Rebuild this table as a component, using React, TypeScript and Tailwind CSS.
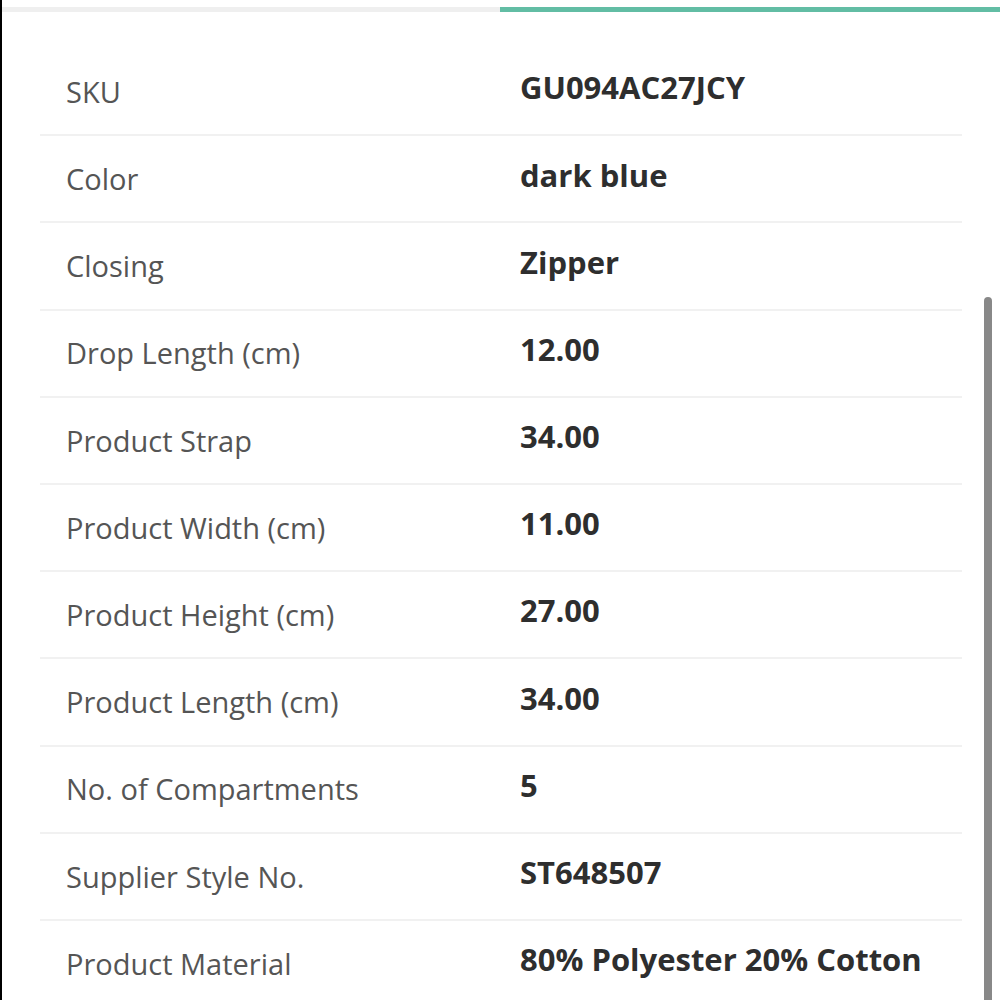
import React from 'react';

interface Spec {
  label: string;
  value: string;
}

const specs: Spec[] = [
  { label: 'SKU', value: 'GU094AC27JCY' },
  { label: 'Color', value: 'dark blue' },
  { label: 'Closing', value: 'Zipper' },
  { label: 'Drop Length (cm)', value: '12.00' },
  { label: 'Product Strap', value: '34.00' },
  { label: 'Product Width (cm)', value: '11.00' },
  { label: 'Product Height (cm)', value: '27.00' },
  { label: 'Product Length (cm)', value: '34.00' },
  { label: 'No. of Compartments', value: '5' },
  { label: 'Supplier Style No.', value: 'ST648507' },
  { label: 'Product Material', value: '80% Polyester 20% Cotton' },
];

const App = () => {
  return (
    <div
      className="relative h-[1000px] w-[1000px] overflow-hidden border-l-2 border-black bg-white"
      style={{ fontFamily: '"Open Sans", Lato, sans-serif' }}
    >
      {/* Tab indicator */}
      <div className="mt-[7px] flex h-[5px]">
        <div className="w-[498px] bg-[#efefef]" />
        <div className="flex-1 bg-[#62bda4]" />
      </div>

      {/* Spec table */}
      <div className="ml-[38px] mt-[37px] w-[922px]">
        {specs.map((spec) => (
          <div
            key={spec.label}
            className="flex h-[87.2px] items-center border-b-2 border-[#f1f1f1]"
          >
            <div className="w-[480px] shrink-0 pl-[26px] text-[29px] text-[#555555]">
              {spec.label}
            </div>
            <div className="-translate-y-[4px] text-[31px] font-bold text-[#2e2e2e]">
              {spec.value}
            </div>
          </div>
        ))}
      </div>

      {/* Scrollbar */}
      <div className="absolute bottom-0 left-[982px] top-[297px] w-[8px] rounded-t-full bg-[#888888]" />
    </div>
  );
};

export default App;
